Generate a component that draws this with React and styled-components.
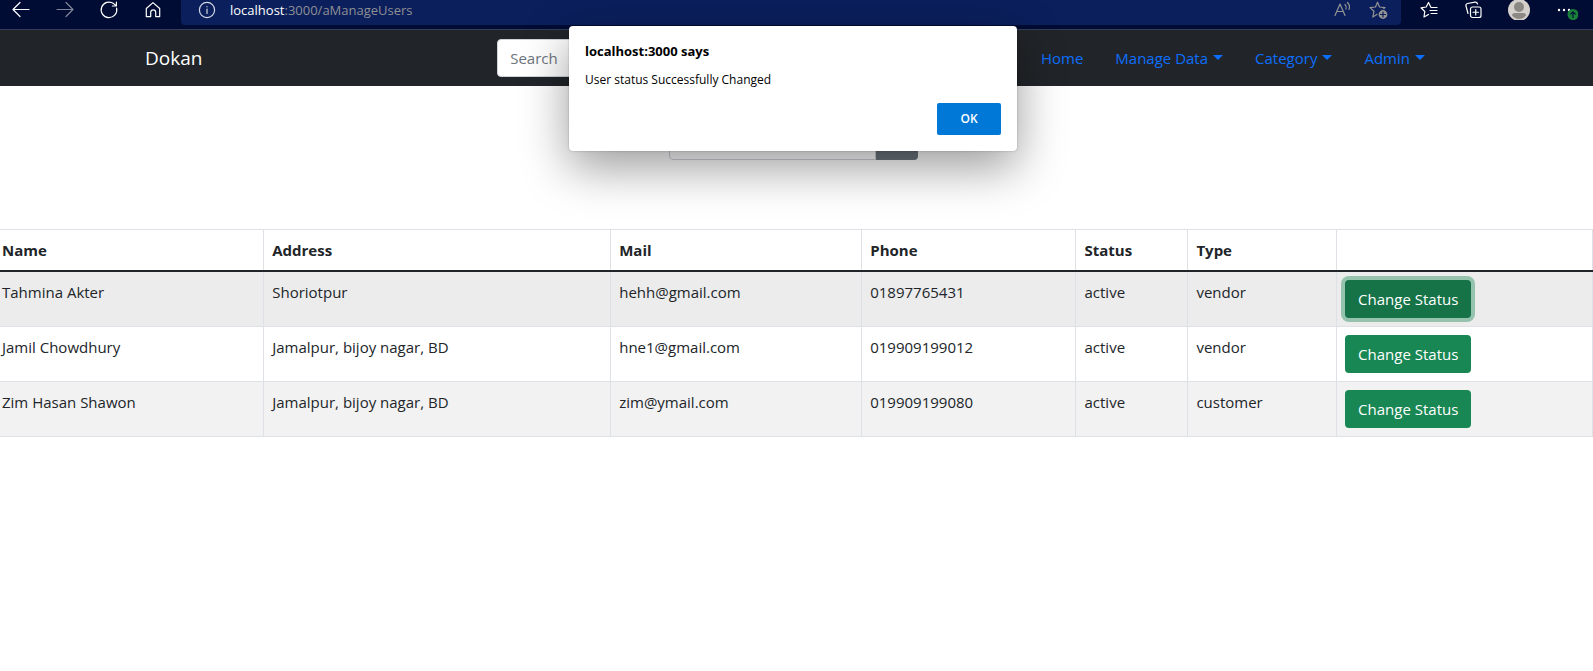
import React from "react";
import styled, { createGlobalStyle, css } from "styled-components";

const Global = createGlobalStyle`
  *, *::before, *::after { box-sizing: border-box; }
  body {
    margin: 0;
    overflow-x: hidden;
    background: #fff;
    color: #212529;
    font: 400 15px/24px "Open Sans", "Noto Sans", sans-serif;
  }
  button, input { font: inherit; }
`;

const Window = styled.div`
  overflow: hidden;
  min-height: 100vh;
`;

const Toolbar = styled.header`
  display: flex;
  align-items: flex-start;
  height: 30px;
  background: #000c33;
  border-bottom: 1px solid #353d5c;
`;

const ToolGroup = styled.div`
  display: flex;
  gap: ${(p) => p.$gap}px;
  padding: 0 ${(p) => p.$right}px 0 ${(p) => p.$left}px;
`;

const ToolButton = styled.button`
  display: flex;
  padding: 0;
  border: 0;
  background: none;
  color: ${(p) => p.$color || "#fff"};
  opacity: ${(p) => (p.disabled ? 0.5 : 1)};
`;

const AddressBar = styled.div`
  display: flex;
  flex: 1;
  height: 25px;
  padding: 0 12px 0 16px;
  background: #0a1f5c;
  border-radius: 0 0 4px 4px;
`;

const Url = styled.span`
  flex: 1;
  padding-left: 13px;
  color: #8f8f94;
  font-size: 13px;
  line-height: 20px;

  b { color: #fff; font-weight: 500; }
`;

const Page = styled.main`
  position: relative;
  margin-left: -7px;
`;

const NavBar = styled.nav`
  height: 56px;
  background: #212529;
`;

const NavInner = styled.div`
  display: flex;
  align-items: center;
  justify-content: space-between;
  max-width: 1296px;
  height: 100%;
  margin: 0 auto;
`;

const Brand = styled.a`
  color: #fff;
  font-size: 19px;
  text-decoration: none;
`;

const TextInput = styled.input`
  width: ${(p) => p.$width}px;
  height: 38px;
  padding: 6px 12px;
  border: 1px solid #ced4da;
  border-radius: ${(p) => (p.$joined ? "4px 0 0 4px" : "4px")};
  background: #fff;
  color: #212529;
  &::placeholder { color: #6c757d; }
`;

const NavLinks = styled.div`
  display: flex;
`;

const navItem = css`
  display: block;
  padding: 8px 16px;
  border: 0;
  background: none;
  color: #0d6efd;
  text-decoration: none;
`;

const NavLink = styled.a`${navItem}`;

const NavDropdown = styled.button`
  ${navItem}
  &::after {
    content: "";
    display: inline-block;
    margin-left: 5px;
    vertical-align: 4px;
    border: 5px solid transparent;
    border-top-color: currentColor;
    border-bottom: 0;
  }
`;

const Filter = styled.form`
  display: flex;
  justify-content: center;
  padding: 36px 0 69px;
`;

const FilterButton = styled.button`
  width: 42px;
  height: 38px;
  border: 0;
  border-radius: 0 4px 4px 0;
  background: #6c757d;
`;

const Table = styled.table`
  width: 100%;
  table-layout: fixed;
  border-collapse: collapse;
  text-align: left;

  th, td {
    padding: 8px;
    border: 1px solid #dee2e6;
    vertical-align: top;
  }
  thead th { border-bottom: 2px solid #212529; }
`;

const Column = styled.col`
  width: ${(p) => p.$share}%;
`;

const Row = styled.tr`
  background: ${(p) => p.$shade};
`;

const StatusButton = styled.button`
  display: block;
  height: 38px;
  padding: 0 13px;
  border: 0;
  border-radius: 4px;
  background: ${(p) => (p.$active ? "#157347" : "#198754")};
  box-shadow: ${(p) => (p.$active ? "0 0 0 4px #95c3ad" : "none")};
  color: #fff;
`;

const Alert = styled.dialog`
  position: absolute;
  top: -4px;
  left: 0;
  right: 0;
  width: 448px;
  margin: 0 auto;
  padding: 16px;
  border: 0;
  border-radius: 4px;
  background: #fff;
  color: #000;
  box-shadow: 0 0 2px rgba(0, 0, 0, 0.3), 0 16px 48px rgba(0, 0, 0, 0.4);
`;

const AlertTitle = styled.h2`
  margin: 0;
  font-size: 13px;
  font-weight: 700;
  line-height: 18px;
`;

const AlertText = styled.p`
  margin: 11px 0 14px;
  font-size: 12px;
  line-height: 18px;
`;

const AlertButton = styled.button`
  display: block;
  width: 64px;
  height: 32px;
  margin-left: auto;
  border: 0;
  border-radius: 2px;
  background: #0078d7;
  color: #fff;
  font-size: 12px;
  font-weight: 600;
`;

const Icon = ({ children, size = 20 }) => (
  <svg width={size} height="20" viewBox={`0 0 ${size} 20`} fill="none" stroke="currentColor" strokeWidth="1.2" strokeLinecap="round" strokeLinejoin="round" aria-hidden="true">
    {children}
  </svg>
);

const columns = [
  ["Name", 16.9], ["Address", 21.7], ["Mail", 15.7], ["Phone", 13.4],
  ["Status", 7], ["Type", 9.3], ["", 16],
];

const users = [
  { cells: ["Tahmina Akter", "Shoriotpur", "hehh@gmail.com", "01897765431", "active", "vendor"], shade: "#ececec", active: true },
  { cells: ["Jamil Chowdhury", "Jamalpur, bijoy nagar, BD", "hne1@gmail.com", "019909199012", "active", "vendor"], shade: "#fff" },
  { cells: ["Zim Hasan Shawon", "Jamalpur, bijoy nagar, BD", "zim@ymail.com", "019909199080", "active", "customer"], shade: "#f2f2f2" },
];

export default function App() {
  return (
    <Window>
      <Global />
      <Toolbar>
        <ToolGroup $gap={24} $left={11} $right={18}>
          <ToolButton aria-label="Back"><Icon><path d="M18 9.500H2M9 2.500L2 9.500l7 7" /></Icon></ToolButton>
          <ToolButton aria-label="Forward" disabled><Icon><path d="M2 9.500h16M11 2.500l7 7-7 7" /></Icon></ToolButton>
          <ToolButton aria-label="Refresh"><Icon><path d="M17.6 8.2A7.8 7.8 0 1 1 14.6 3.6L17 5.5M17.4 2v4h-4" /></Icon></ToolButton>
          <ToolButton aria-label="Home"><Icon><path d="M3.300 8.500L10 2.600l6.700 5.900v8.100h-4v-4.300a2.500 2.500 0 0 0-5 0v4.300H3.300z" /></Icon></ToolButton>
        </ToolGroup>
        <AddressBar>
          <ToolButton aria-label="Site information" $color="#d5d9e6">
            <Icon><circle cx="10" cy="10" r="7.6" /><path d="M10 9v4.500M10 6.500v.3" /></Icon>
          </ToolButton>
          <Url><b>localhost</b>:3000/aManageUsers</Url>
          <ToolGroup $gap={16} $left={0} $right={0}>
            <ToolButton aria-label="Read aloud" $color="#949494">
              <Icon><path d="M2 15.500L7 4l5 11.500M4 11.500h6M12 4.500q2 2 1 4.500M14.500 2.500q3 3 1.500 7" /></Icon>
            </ToolButton>
            <ToolButton aria-label="Add to favorites" $color="#949494">
              <Icon>
                <path d="M8.500 2.200L10.500 7l5.500.6-4.100 3.600L13.200 17 8.500 14l-4.700 3L5 11.200 1 7.600 6.500 7z" />
                <circle cx="14" cy="14.500" r="5" fill="currentColor" stroke="#0a1f5c" />
                <path d="M14 12v5M11.500 14.500h5" stroke="#0a1f5c" />
              </Icon>
            </ToolButton>
          </ToolGroup>
        </AddressBar>
        <ToolGroup $gap={24} $left={19} $right={15}>
          <ToolButton aria-label="Favorites"><Icon><path d="M10.800 7L8.500 2.500 6.200 7 1 7.800l3.800 3.700L4 17l4.500-2.500M11 7.500h6M10 10.500h7M11 13.500h6" /></Icon></ToolButton>
          <ToolButton aria-label="Collections"><Icon><rect x="6.500" y="7" width="10.500" height="10.500" rx="2" /><path d="M11.750 9.500v5.500M9 12.250h5.500M4 13.500L2 6Q1.500 4 3.500 3.500L11 2.200Q13 2 13.500 4" /></Icon></ToolButton>
          <ToolButton aria-label="Profile">
            <Icon size={22}><circle cx="11" cy="10" r="11" fill="#d4d1cc" stroke="none" /><circle cx="11" cy="7" r="5" fill="#8c8883" stroke="none" /><path d="M4 15.500Q4 13 7 13h8q3 0 3 2.500-3 3.500-7 3.500t-7-3.500z" fill="#8c8883" stroke="none" /></Icon>
          </ToolButton>
          <ToolButton aria-label="Settings and more">
            <Icon size={24}>
              <g fill="currentColor" stroke="none"><circle cx="5" cy="10" r="1.200" /><circle cx="10" cy="10" r="1.200" /><circle cx="15" cy="10" r="1.200" /></g>
              <circle cx="19" cy="14.500" r="5.500" fill="#188038" stroke="none" />
              <path d="M19 17.500V12M16.800 14l2.200-2.200 2.200 2.200" stroke="#00113d" />
            </Icon>
          </ToolButton>
        </ToolGroup>
      </Toolbar>

      <Page>
        <NavBar>
          <NavInner>
            <Brand href="#">Dokan</Brand>
            <TextInput $width={233} type="search" placeholder="Search" aria-label="Search products" />
            <NavLinks>
              <NavLink href="#">Home</NavLink>
              <NavDropdown>Manage Data</NavDropdown>
              <NavDropdown>Category</NavDropdown>
              <NavDropdown>Admin</NavDropdown>
            </NavLinks>
          </NavInner>
        </NavBar>

        <Filter>
          <TextInput $width={207} $joined type="text" aria-label="Search users" />
          <FilterButton type="button" aria-label="Find" />
        </Filter>

        <Table>
          <colgroup>
            {columns.map(([label, share]) => <Column key={label} $share={share} />)}
          </colgroup>
          <thead>
            <tr>{columns.map(([label]) => <th key={label} scope="col">{label}</th>)}</tr>
          </thead>
          <tbody>
            {users.map((user) => (
              <Row key={user.cells[0]} $shade={user.shade}>
                {user.cells.map((value, i) => <td key={i}>{value}</td>)}
                <td><StatusButton $active={user.active}>Change Status</StatusButton></td>
              </Row>
            ))}
          </tbody>
        </Table>

        <Alert open aria-labelledby="alert-title">
          <AlertTitle id="alert-title">localhost:3000 says</AlertTitle>
          <AlertText>User status Successfully Changed</AlertText>
          <AlertButton>OK</AlertButton>
        </Alert>
      </Page>
    </Window>
  );
}
